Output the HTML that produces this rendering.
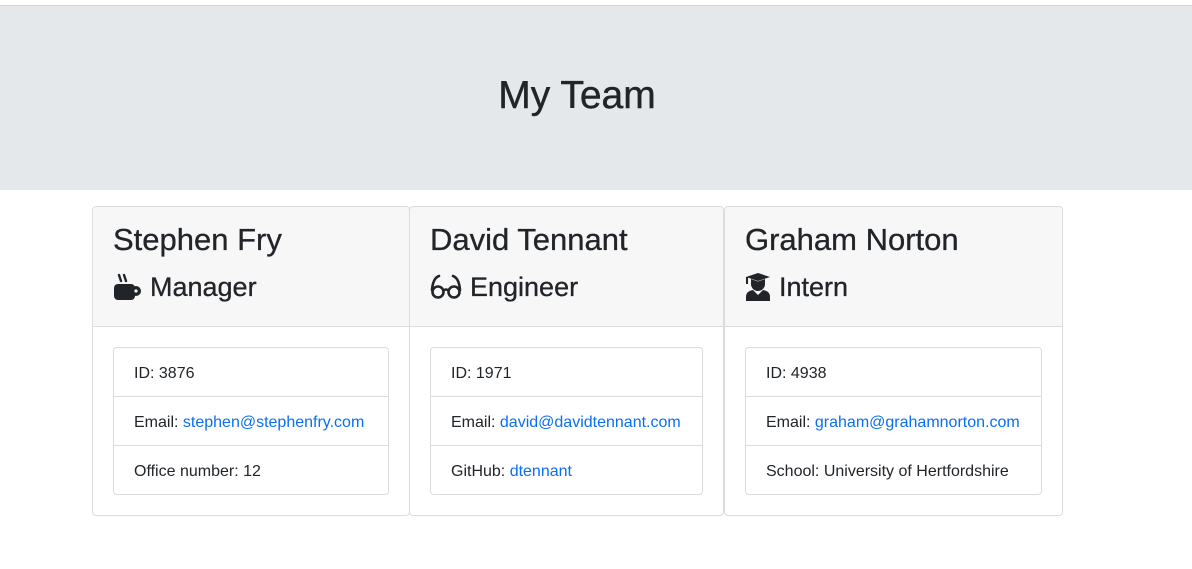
<!DOCTYPE html>
<html><head><meta charset="utf-8"><style>
*{box-sizing:border-box;margin:0;padding:0}
body{width:1192px;height:569px;background:#fff;font-family:"Liberation Sans",Arial,sans-serif;color:#212529;overflow:hidden;position:relative}
.jumbo{position:absolute;top:5px;left:0;width:1192px;height:185px;background:#e4e8eb;border-top:1px solid #d3d6d9}
.jumbo h1{position:absolute;top:67px;left:0;width:1154px;text-align:center;font-size:39px;font-weight:500;line-height:46px;-webkit-text-stroke:0.4px #212529}
.card{position:absolute;top:206px;height:310px;border:1px solid #dcdcdc;border-radius:4px;background:#fff}
.head{height:120px;background:#f7f7f7;border-bottom:1px solid #dcdcdc;padding:0 20px;border-radius:4px 4px 0 0}
.name{font-size:31px;line-height:32px;padding-top:17px;font-weight:500;-webkit-text-stroke:0.3px #212529}
.role{font-size:27px;line-height:30px;margin-top:16px;display:flex;align-items:center;gap:8px;font-weight:500;-webkit-text-stroke:0.3px #212529}
.list{position:absolute;top:140px;left:20px;right:20px;border:1px solid #dcdcdc;border-radius:4px}
.list div{height:49px;line-height:51px;padding-left:20px;font-size:16px;border-bottom:1px solid #dcdcdc}
.list div:last-child{border-bottom:none;height:48px}
a{color:#0a6ff0;text-decoration:none}
</style></head><body>
<div class="jumbo"><h1>My Team</h1></div>

<div class="card" style="left:92px;width:318px">
<div class="head"><div class="name">Stephen Fry</div>
<div class="role"><svg width="29" height="28" viewBox="0 0 29 28"><path d="M6 2 L8 8 M11 2 L13 8" stroke="#212529" stroke-width="2.4" stroke-linecap="round"/><rect x="1" y="11" width="21" height="16" rx="4" fill="#212529"/><circle cx="23" cy="18" r="5" fill="#212529"/><circle cx="23" cy="18" r="1.6" fill="#f7f7f7"/></svg>Manager</div></div>
<div class="list"><div>ID: 3876</div><div>Email: <a>stephen@stephenfry.com</a></div><div>Office number: 12</div></div>
</div>

<div class="card" style="left:409px;width:315px">
<div class="head"><div class="name">David Tennant</div>
<div class="role"><svg width="32" height="26" viewBox="0 0 32 26"><path d="M9 2 Q3 4 2 16 M23 2 Q29 4 30 16" fill="none" stroke="#212529" stroke-width="2.6" stroke-linecap="round"/><circle cx="8" cy="18" r="5.5" fill="none" stroke="#212529" stroke-width="2.6"/><circle cx="24" cy="18" r="5.5" fill="none" stroke="#212529" stroke-width="2.6"/><path d="M13 17 Q16 14 19 17" fill="none" stroke="#212529" stroke-width="2.4"/></svg>Engineer</div></div>
<div class="list"><div>ID: 1971</div><div>Email: <a>david@davidtennant.com</a></div><div>GitHub: <a>dtennant</a></div></div>
</div>

<div class="card" style="left:724px;width:339px">
<div class="head"><div class="name">Graham Norton</div>
<div class="role"><svg width="26" height="28" viewBox="0 0 26 28"><path d="M1 4 L13 0 L25 4 L13 8 Z" fill="#212529"/><path d="M2 4 V11" stroke="#212529" stroke-width="2"/><path d="M6 6 V11 A7 7 0 0 0 20 11 V6 L13 8.5 Z" fill="#212529"/><path d="M1 28 V24 Q1 18 8 17 L13 22 L18 17 Q25 18 25 24 V28 Z" fill="#212529"/></svg>Intern</div></div>
<div class="list"><div>ID: 4938</div><div>Email: <a>graham@grahamnorton.com</a></div><div>School: University of Hertfordshire</div></div>
</div>
</body></html>
